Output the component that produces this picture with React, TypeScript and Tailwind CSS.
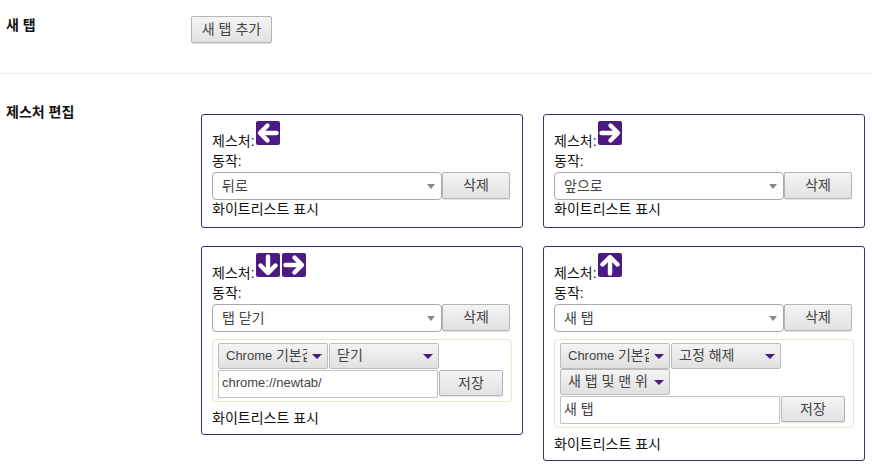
import React from "react";

const FONT = "[font-family:'Liberation_Sans','Noto_Sans_CJK_KR',sans-serif]";

type Dir = "left" | "right" | "up" | "down";

function Arrow({ dir }: { dir: Dir }) {
  const rot = { left: 0, right: 180, up: 90, down: 270 }[dir];
  return (
    <svg width="24" height="24" viewBox="0 0 24 24" className="block">
      <rect width="24" height="24" rx="2" fill="#4c1a84" />
      <g transform={`rotate(${rot} 12 12)`} fill="none" stroke="#fff" strokeWidth="4.4" strokeLinecap="round" strokeLinejoin="round">
        <path d="M5 12H20.5" />
        <path d="M11.5 4.5 4 12l7.5 7.5" />
      </g>
    </svg>
  );
}

function GrayButton({ label, className }: { label: string; className: string }) {
  return (
    <button className={`bg-gradient-to-b from-[#f4f4f4] to-[#e2e2e2] border border-[#b4b4b4] rounded-[2px] text-[14px] text-[#444] shadow-[0_1px_1px_rgba(0,0,0,0.12)] ${className}`}>
      {label}
    </button>
  );
}

function Drop({ label, latin, w }: { label: string; latin?: string; w: string }) {
  return (
    <div className={`h-[26px] ${w} flex items-center justify-between pl-[7px] pr-[5px] bg-gradient-to-b from-[#f4f4f4] to-[#e0e0e0] border border-[#bcbcbc] rounded-[2px] text-[14px] text-[#444]`}>
      <span className="overflow-hidden whitespace-nowrap flex-1 pb-[2px]">
        {latin && <span className="text-[13px]">{latin} </span>}
        {label}
      </span>
      <span className="ml-[5px] shrink-0 w-0 h-0 border-x-[5px] border-x-transparent border-t-[5px] border-t-[#4c1a84]" />
    </div>
  );
}

type DropDef = { label: string; latin?: string; w: string };

function Card({
  dirs,
  action,
  panel,
}: {
  dirs: Dir[];
  action: string;
  panel?: { drops: DropDef[][]; value: string; latinValue?: boolean };
}) {
  return (
    <div className={`border border-[#3b2f72] rounded-[3px] pt-[6px] pl-[10px] pr-[12px] ${panel ? "pb-[7px]" : "pb-[9px]"}`}>
      <div className="flex items-end h-[24px] leading-[17px]">
        <span className="mb-[-5px]">제스처:</span>
        <span className="flex gap-[2px] ml-[1px]">
          {dirs.map((d, i) => (
            <Arrow key={i} dir={d} />
          ))}
        </span>
      </div>
      <div className="h-[27px] pt-[8px] leading-[17px]">동작:</div>
      <div className="flex items-start">
        <div className="w-[230px] h-[28px] flex items-center justify-between pl-[9px] pr-[6px] bg-white border border-[#a9a9a9] rounded-[4px] text-[#444]">
          <span>{action}</span>
          <span className="w-0 h-0 border-x-[4px] border-x-transparent border-t-[5px] border-t-[#888] mt-[1px]" />
        </div>
        <GrayButton label="삭제" className="w-[68px] h-[27px]" />
      </div>
      {panel && (
        <div className="w-[300px] mt-[7px] border border-[#e8ebc8] rounded-[4px] pt-[3px] pb-[3px] px-[5px]">
          {panel.drops.map((row, i) => (
            <div key={i} className="flex gap-[1px]">
              {row.map((d, j) => (
                <Drop key={j} label={d.label} latin={d.latin} w={d.w} />
              ))}
            </div>
          ))}
          <div className="flex items-start mt-[1px]">
            <div className={`w-[220px] h-[28px] flex items-center pl-[3px] pb-[2px] bg-white border border-[#c4c4c4] rounded-[1px] text-[#444] ${panel.latinValue ? "text-[13px]" : ""}`}>
              {panel.value}
            </div>
            <GrayButton label="저장" className="w-[64px] h-[26px] ml-[1px]" />
          </div>
        </div>
      )}
      <div className={`${panel ? "mt-[8px]" : "mt-[1px]"} leading-[17px]`}>화이트리스트 표시</div>
    </div>
  );
}

export default function App() {
  return (
    <div className={`${FONT} w-[872px] h-[471px] overflow-hidden bg-white text-[14px] text-[#111]`}>
      <div className="h-[74px] flex items-start border-b border-[#ececec]">
        <div className="w-[191px] pl-[6px] pt-[17px] font-bold leading-[17px]">새 탭</div>
        <GrayButton label="새 탭 추가" className="mt-[16px] w-[81px] h-[27px]" />
      </div>
      <div className="flex items-start">
        <div className="w-[201px] pl-[6px] pt-[30px] font-bold leading-[17px]">제스처 편집</div>
        <div className="pt-[40px] grid grid-cols-[322px_322px] gap-x-[20px] gap-y-[18px] items-start">
          <Card dirs={["left"]} action="뒤로" />
          <Card dirs={["right"]} action="앞으로" />
          <Card
            dirs={["down", "right"]}
            action="탭 닫기"
            panel={{
              drops: [[{ latin: "Chrome", label: "기본값", w: "w-[110px]" }, { label: "닫기", w: "w-[110px]" }]],
              value: "chrome://newtab/",
              latinValue: true,
            }}
          />
          <Card
            dirs={["up"]}
            action="새 탭"
            panel={{
              drops: [
                [{ latin: "Chrome", label: "기본값", w: "w-[110px]" }, { label: "고정 해제", w: "w-[110px]" }],
                [{ label: "새 탭 및 맨 위", w: "w-[110px]" }],
              ],
              value: "새 탭",
            }}
          />
        </div>
      </div>
    </div>
  );
}
